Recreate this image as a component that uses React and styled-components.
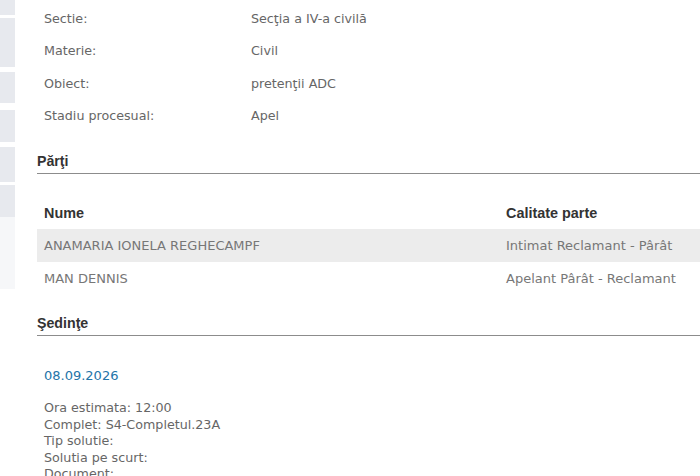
import React from 'react';
import styled, { createGlobalStyle } from 'styled-components';

const GlobalStyle = createGlobalStyle`
  html, body {
    margin: 0;
    padding: 0;
    background: #ffffff;
    overflow: hidden;
  }
  body {
    font-family: 'DejaVu Sans', Verdana, sans-serif;
  }
`;

const Page = styled('div')`
  display: flex;
  width: 700px;
  height: 476px;
  overflow: hidden;
`;

const Sidebar = styled('div')`
  width: 15px;
  flex-shrink: 0;
  display: flex;
  flex-direction: column;
`;

const SideTab = styled('div')`
  height: ${props => props.h}px;
  margin-bottom: ${props => props.gap}px;
  background-color: ${props => (props.faint ? '#f6f7f9' : '#e7e9ee')};
`;

const Main = styled('div')`
  flex: 1;
  margin-left: 22px;
  padding-top: 2px;
  min-width: 0;
`;

const InfoRow = styled('div')`
  display: grid;
  grid-template-columns: 207px 1fr;
  align-items: center;
  height: 32.5px;
  padding-left: 7px;
  font-size: 12.7px;
  color: #666666;
`;

const SectionTitle = styled('div')`
  font-family: 'Liberation Sans', Arial, sans-serif;
  font-weight: bold;
  font-size: 14.2px;
  color: #333333;
  height: 24px;
  display: flex;
  align-items: center;
  border-bottom: 1px solid #8c8c8c;
  margin-top: ${props => props.top}px;
`;

const Table = styled('div')`
  margin-top: 22px;
`;

const TableRow = styled('div')`
  display: grid;
  grid-template-columns: 462px 1fr;
  align-items: center;
  height: 33px;
  background-color: ${props => (props.shaded ? '#ececec' : 'transparent')};
`;

const HeadCell = styled('div')`
  padding-left: 7px;
  font-family: 'Liberation Sans', Arial, sans-serif;
  font-weight: bold;
  font-size: 14.4px;
  color: #333333;
`;

const Cell = styled('div')`
  padding-left: 7px;
  font-size: 13px;
  color: #777777;
  white-space: nowrap;
`;

const Hearing = styled('div')`
  padding-left: 7px;
  margin-top: 30px;
`;

const HearingDate = styled('div')`
  font-size: 13px;
  color: #2474a8;
  line-height: 20px;
`;

const HearingDetails = styled('div')`
  margin-top: 14px;
  font-size: 12.7px;
  line-height: 16.6px;
  color: #666666;
`;

const info = [
  ['Sectie:', 'Secţia a IV-a civilă'],
  ['Materie:', 'Civil'],
  ['Obiect:', 'pretenţii ADC'],
  ['Stadiu procesual:', 'Apel'],
];

const parties = [
  ['ANAMARIA IONELA REGHECAMPF', 'Intimat Reclamant - Pârât'],
  ['MAN DENNIS', 'Apelant Pârât - Reclamant'],
];

const details = [
  'Ora estimata: 12:00',
  'Complet: S4-Completul.23A',
  'Tip solutie:',
  'Solutia pe scurt:',
  'Document:',
];

const tabs = [
  [15, 3],
  [49, 5],
  [31, 7],
  [32, 5],
  [35, 3],
  [32, 0],
];

export default function App() {
  return (
    <>
      <GlobalStyle />
      <Page>
        <Sidebar>
          {tabs.map(([h, gap], i) => (
            <SideTab key={i} h={h} gap={gap} />
          ))}
          <SideTab h={72} gap={0} faint />
        </Sidebar>
        <Main>
          {info.map(([label, value]) => (
            <InfoRow key={label}>
              <span>{label}</span>
              <span>{value}</span>
            </InfoRow>
          ))}
          <SectionTitle top={17}>Părţi</SectionTitle>
          <Table>
            <TableRow>
              <HeadCell>Nume</HeadCell>
              <HeadCell>Calitate parte</HeadCell>
            </TableRow>
            {parties.map(([name, role], i) => (
              <TableRow key={name} shaded={i === 0}>
                <Cell>{name}</Cell>
                <Cell>{role}</Cell>
              </TableRow>
            ))}
          </Table>
          <SectionTitle top={16}>Şedinţe</SectionTitle>
          <Hearing>
            <HearingDate>08.09.2026</HearingDate>
            <HearingDetails>
              {details.map(line => (
                <div key={line}>{line}</div>
              ))}
            </HearingDetails>
          </Hearing>
        </Main>
      </Page>
    </>
  );
}
